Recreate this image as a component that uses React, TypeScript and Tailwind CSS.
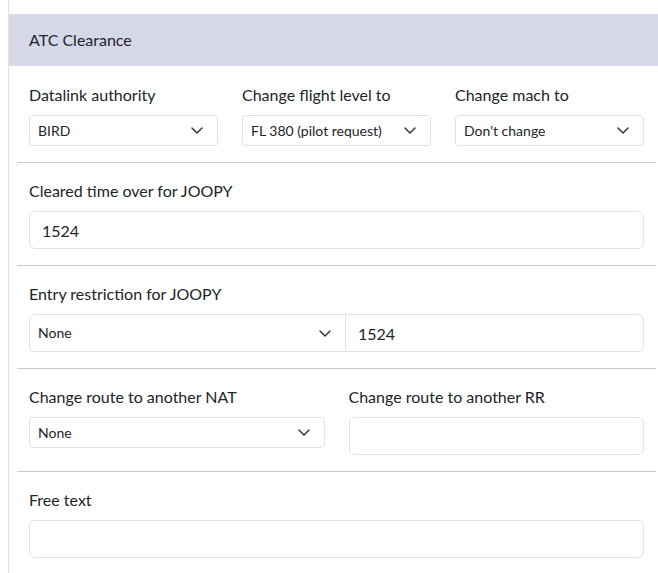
import React from 'react';

const Chevron = () => (
  <svg width="12" height="7" viewBox="0 0 12 7" fill="none" className="shrink-0">
    <path d="M1 1l5 5 5-5" stroke="#343a40" strokeWidth="1.5" strokeLinecap="round" strokeLinejoin="round" />
  </svg>
);

// fake select box, size "sm" unless told otherwise
const Select = ({ value, className = '' }: { value: string; className?: string }) => (
  <div
    className={`flex items-center justify-between bg-white border border-[#dee2e6] pl-2 pr-[14px] text-sm text-[#212529] ${className}`}
  >
    <span className="truncate">{value}</span>
    <Chevron />
  </div>
);

const Input = ({ value = '', className = '' }: { value?: string; className?: string }) => (
  <input
    readOnly
    value={value}
    className={`block h-[38px] bg-white border border-[#dee2e6] px-3 text-base text-[#212529] outline-none ${className}`}
  />
);

const Label = ({ children }: { children: React.ReactNode }) => (
  <label className="block mb-2 text-base leading-6">{children}</label>
);

export default function App() {
  return (
    <div className="w-[658px] h-[573px] overflow-hidden bg-white text-[#212529] font-['Lato',sans-serif]">
      <div className="ml-2 w-[656px] h-full border-l border-[#dee2e6] pt-[14px]">
        {/* card header */}
        <div className="h-[52px] flex items-center pl-5 bg-[#d6d8e8] text-base">ATC Clearance</div>

        <div className="px-2">
          {/* authority / level / mach */}
          <section className="px-3 pt-[17px] pb-4 border-b border-[#c8c9ca]">
            <div className="grid grid-cols-3 gap-6">
              <div>
                <Label>Datalink authority</Label>
                <Select value="BIRD" className="h-[31px] rounded" />
              </div>
              <div>
                <Label>Change flight level to</Label>
                <Select value="FL 380 (pilot request)" className="h-[31px] rounded" />
              </div>
              <div>
                <Label>Change mach to</Label>
                <Select value="Don't change" className="h-[31px] rounded" />
              </div>
            </div>
          </section>

          <section className="px-3 py-4 border-b border-[#c8c9ca]">
            <Label>Cleared time over for JOOPY</Label>
            <Input value="1524" className="w-full rounded-md" />
          </section>

          <section className="px-3 py-4 border-b border-[#c8c9ca]">
            <Label>Entry restriction for JOOPY</Label>
            <div className="flex">
              <Select value="None" className="w-[317px] h-[38px] rounded-l-md" />
              <Input value="1524" className="flex-1 min-w-0 -ml-px rounded-r-md" />
            </div>
          </section>

          <section className="px-3 py-4 border-b border-[#c8c9ca]">
            <div className="grid grid-cols-2 gap-6">
              <div>
                <Label>Change route to another NAT</Label>
                <Select value="None" className="h-[31px] rounded" />
              </div>
              <div>
                <Label>Change route to another RR</Label>
                <Input className="w-full rounded-md" />
              </div>
            </div>
          </section>

          <section className="px-3 py-4">
            <Label>Free text</Label>
            <Input className="w-full rounded-md" />
          </section>
        </div>
      </div>
    </div>
  );
}
